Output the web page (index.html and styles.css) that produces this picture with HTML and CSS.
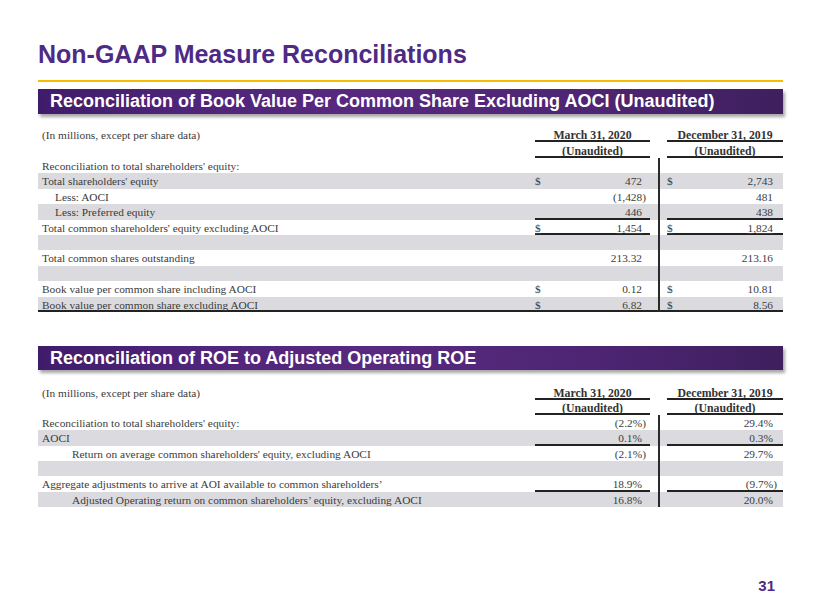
FILE: index.html
```html
<!DOCTYPE html>
<html lang="en">
<head>
<meta charset="utf-8">
<title>Non-GAAP Measure Reconciliations</title>
<link rel="stylesheet" href="styles.css">
</head>
<body>
<div class="slide">
  <h1 class="title">Non-GAAP Measure Reconciliations</h1>
  <div class="rule"></div>

  <div class="bar">Reconciliation of Book Value Per Common Share Excluding AOCI (Unaudited)</div>
  <div class="tbl t1">
    <div class="row hrow1 h1a">
      <div class="lab">(In millions, except per share data)</div>
      <div class="hd ul">March 31, 2020</div>
      <div class="gap"></div>
      <div class="hd ul">December 31, 2019</div>
    </div>
    <div class="row hrow2 h2a">
      <div class="lab"></div>
      <div class="hd ul">(Unaudited)</div>
      <div class="gap"></div>
      <div class="hd ul">(Unaudited)</div>
    </div>
    <div class="row">
      <div class="lab">Reconciliation to total shareholders' equity:</div>
      <div class="val"></div><div class="gap"></div><div class="val v2"></div>
    </div>
    <div class="row shade">
      <div class="lab">Total shareholders' equity</div>
      <div class="val"><span>$</span><span>472</span></div><div class="gap"></div>
      <div class="val v2"><span>$</span><span>2,743</span></div>
    </div>
    <div class="row">
      <div class="lab ind1">Less: AOCI</div>
      <div class="val"><span></span><span class="neg">(1,428)</span></div><div class="gap"></div>
      <div class="val v2"><span></span><span>481</span></div>
    </div>
    <div class="row shade">
      <div class="lab ind1">Less: Preferred equity</div>
      <div class="val ul"><span></span><span>446</span></div><div class="gap"></div>
      <div class="val v2 ul"><span></span><span>438</span></div>
    </div>
    <div class="row">
      <div class="lab">Total common shareholders' equity excluding AOCI</div>
      <div class="val ul tu"><span>$</span><span>1,454</span></div><div class="gap"></div>
      <div class="val v2 ul tu"><span>$</span><span>1,824</span></div>
    </div>
    <div class="row shade">
      <div class="lab"></div>
      <div class="val"></div><div class="gap"></div><div class="val v2"></div>
    </div>
    <div class="row">
      <div class="lab">Total common shares outstanding</div>
      <div class="val"><span></span><span>213.32</span></div><div class="gap"></div>
      <div class="val v2"><span></span><span>213.16</span></div>
    </div>
    <div class="row shade">
      <div class="lab"></div>
      <div class="val"></div><div class="gap"></div><div class="val v2"></div>
    </div>
    <div class="row">
      <div class="lab">Book value per common share including AOCI</div>
      <div class="val"><span>$</span><span>0.12</span></div><div class="gap"></div>
      <div class="val v2"><span>$</span><span>10.81</span></div>
    </div>
    <div class="row shade last">
      <div class="lab">Book value per common share excluding AOCI</div>
      <div class="val"><span>$</span><span>6.82</span></div><div class="gap"></div>
      <div class="val v2"><span>$</span><span>8.56</span></div>
    </div>
  </div>

  <div class="bar bar2">Reconciliation of ROE to Adjusted Operating ROE</div>
  <div class="tbl t2">
    <div class="row hrow1 h1b">
      <div class="lab">(In millions, except per share data)</div>
      <div class="hd ul">March 31, 2020</div>
      <div class="gap"></div>
      <div class="hd ul">December 31, 2019</div>
    </div>
    <div class="row hrow2 h2b">
      <div class="lab"></div>
      <div class="hd ul">(Unaudited)</div>
      <div class="gap"></div>
      <div class="hd ul">(Unaudited)</div>
    </div>
    <div class="row">
      <div class="lab">Reconciliation to total shareholders' equity:</div>
      <div class="val"><span></span><span class="neg">(2.2%)</span></div><div class="gap"></div>
      <div class="val v2"><span></span><span>29.4%</span></div>
    </div>
    <div class="row shade">
      <div class="lab">AOCI</div>
      <div class="val ul"><span></span><span>0.1%</span></div><div class="gap"></div>
      <div class="val v2 ul"><span></span><span>0.3%</span></div>
    </div>
    <div class="row">
      <div class="lab ind2">Return on average common shareholders' equity, excluding AOCI</div>
      <div class="val"><span></span><span class="neg">(2.1%)</span></div><div class="gap"></div>
      <div class="val v2"><span></span><span>29.7%</span></div>
    </div>
    <div class="row shade">
      <div class="lab"></div>
      <div class="val"></div><div class="gap"></div><div class="val v2"></div>
    </div>
    <div class="row">
      <div class="lab">Aggregate adjustments to arrive at AOI available to common shareholders’</div>
      <div class="val ul"><span></span><span>18.9%</span></div><div class="gap"></div>
      <div class="val v2 ul"><span></span><span class="neg">(9.7%)</span></div>
    </div>
    <div class="row shade">
      <div class="lab ind2">Adjusted Operating return on common shareholders’ equity, excluding AOCI</div>
      <div class="val"><span></span><span>16.8%</span></div><div class="gap"></div>
      <div class="val v2"><span></span><span>20.0%</span></div>
    </div>
  </div>

  <div class="pagenum">31</div>
</div>
</body>
</html>
```

FILE: styles.css
```css
* {
  box-sizing: border-box;
  margin: 0;
  padding: 0;
}

html, body {
  background: #ffffff;
}

body {
  width: 820px;
  height: 615px;
  overflow: hidden;
  font-family: "Liberation Sans", Arial, sans-serif;
}

.slide {
  padding: 40px 37px 0 38px;
  height: 615px;
}

.title {
  font-size: 25px;
  line-height: 29px;
  font-weight: bold;
  color: #4e2a84;
}

.rule {
  height: 2px;
  margin-top: 11px;
  background: #f5bd00;
}

.bar {
  position: relative;
  z-index: 1;
  margin-top: 7px;
  height: 25px;
  line-height: 25px;
  padding-left: 12px;
  font-size: 18px;
  font-weight: bold;
  color: #ffffff;
  white-space: nowrap;
  background: linear-gradient(to right, #3f1c69 0%, #4e2479 18%, #58297f 45%, #4d2573 75%, #3f1f5e 100%);
  box-shadow: 2px 3px 3px rgba(0, 0, 0, 0.35);
}

.bar2 {
  margin-top: 34px;
  height: 24px;
  line-height: 24px;
}

.tbl {
  font-family: "Liberation Serif", "Times New Roman", serif;
  font-size: 11.35px;
  color: #3c3c3c;
}

.row {
  display: grid;
  grid-template-columns: 497px 115px 17px 116px;
  height: 15.4px;
  line-height: 14px;
}

.row > div {
  padding-top: 1px;
  white-space: nowrap;
}

.row.shade {
  background: #dbdbdf;
}

.row.last {
  box-shadow: inset 0 -2px 0 #222222;
}

.hrow1, .hrow2 {
  align-items: end;
}

.hrow1 > div, .hrow2 > div {
  padding-top: 0;
}

.h1a { height: 28px; }
.h2a { height: 16px; }
.h1b { height: 30px; }
.h2b { height: 15px; }

.t2 .row:not(.hrow1):not(.hrow2) {
  height: 15.33px;
}

.lab {
  padding-left: 4px;
}

.ind1 {
  padding-left: 17px;
}

.ind2 {
  padding-left: 34px;
}

.hd {
  font-size: 11.8px;
  font-weight: bold;
  color: #333333;
  height: 100%;
  display: flex;
  align-items: flex-end;
  justify-content: center;
}

.gap {
  background: linear-gradient(#2a2a2a, #2a2a2a) 8px 0 / 2px 100% no-repeat;
}

.val {
  display: flex;
  justify-content: space-between;
  padding-right: 8px;
}

.val.v2 {
  padding-right: 10px;
}

.ul {
  background: linear-gradient(#222222, #222222) left bottom / 100% 2px no-repeat;
}

.tu span {
  text-decoration: underline;
}

.neg {
  margin-right: -4px;
}

.pagenum {
  margin-top: 70px;
  padding-right: 8px;
  text-align: right;
  font-size: 15px;
  line-height: 18px;
  font-weight: bold;
  color: #4e2a84;
}
```
